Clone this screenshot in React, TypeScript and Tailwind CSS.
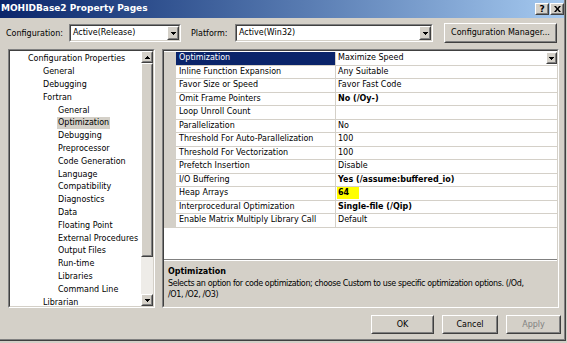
import React from "react";

const treeItems: { label: string; level: number; selected?: boolean }[] = [
  { label: "Configuration Properties", level: 0 },
  { label: "General", level: 1 },
  { label: "Debugging", level: 1 },
  { label: "Fortran", level: 1 },
  { label: "General", level: 2 },
  { label: "Optimization", level: 2, selected: true },
  { label: "Debugging", level: 2 },
  { label: "Preprocessor", level: 2 },
  { label: "Code Generation", level: 2 },
  { label: "Language", level: 2 },
  { label: "Compatibility", level: 2 },
  { label: "Diagnostics", level: 2 },
  { label: "Data", level: 2 },
  { label: "Floating Point", level: 2 },
  { label: "External Procedures", level: 2 },
  { label: "Output Files", level: 2 },
  { label: "Run-time", level: 2 },
  { label: "Libraries", level: 2 },
  { label: "Command Line", level: 2 },
  { label: "Librarian", level: 1 },
];

const properties: { name: string; value: string; bold?: boolean; highlight?: boolean }[] = [
  { name: "Optimization", value: "Maximize Speed" },
  { name: "Inline Function Expansion", value: "Any Suitable" },
  { name: "Favor Size or Speed", value: "Favor Fast Code" },
  { name: "Omit Frame Pointers", value: "No (/Oy-)", bold: true },
  { name: "Loop Unroll Count", value: "" },
  { name: "Parallelization", value: "No" },
  { name: "Threshold For Auto-Parallelization", value: "100" },
  { name: "Threshold For Vectorization", value: "100" },
  { name: "Prefetch Insertion", value: "Disable" },
  { name: "I/O Buffering", value: "Yes (/assume:buffered_io)", bold: true },
  { name: "Heap Arrays", value: "64", bold: true, highlight: true },
  { name: "Interprocedural Optimization", value: "Single-file (/Qip)", bold: true },
  { name: "Enable Matrix Multiply Library Call", value: "Default" },
];

const indents = ["pl-[17px]", "pl-[32px]", "pl-[47px]"];

const Raised = ({ className = "", children }: { className?: string; children?: React.ReactNode }) => (
  <div className={`border border-t-white border-l-white border-b-[#404040] border-r-[#404040] bg-[#d4d0c8] ${className}`}>
    <div className="flex h-full w-full items-center justify-center border border-t-[#d4d0c8] border-l-[#d4d0c8] border-b-[#808080] border-r-[#808080]">
      {children}
    </div>
  </div>
);

const Sunken = ({ className = "", children }: { className?: string; children?: React.ReactNode }) => (
  <div className={`border border-t-[#808080] border-l-[#808080] border-b-white border-r-white ${className}`}>
    <div className="flex h-full w-full flex-col border border-t-[#404040] border-l-[#404040] border-b-[#d4d0c8] border-r-[#d4d0c8]">
      {children}
    </div>
  </div>
);

const ArrowDown = () => (
  <svg width="5" height="3" viewBox="0 0 5 3">
    <path d="M0 0h5v1H0zM1 1h3v1H1zM2 2h1v1H2z" fill="#000" />
  </svg>
);

const ArrowUp = () => (
  <svg width="5" height="3" viewBox="0 0 5 3">
    <path d="M2 0h1v1H2zM1 1h3v1H1zM0 2h5v1H0z" fill="#000" />
  </svg>
);

const Select = ({ value, width }: { value: string; width: string }) => (
  <Sunken className={`h-[18px] ${width} bg-white`}>
    <div className="flex h-full items-center justify-between">
      <span className="pl-[2px] leading-none">{value}</span>
      <Raised className="h-full w-[12px]">
        <ArrowDown />
      </Raised>
    </div>
  </Sunken>
);

export default function App() {
  return (
    <div className="h-[343px] w-[567px] overflow-hidden bg-[#d4d0c8] font-['DejaVu_Sans',sans-serif] text-[8px] text-black">
      <div className="h-[341px] w-[566px] border-b border-r border-[#404040]">
        <div className="h-full border-b border-r border-[#808080]">
          {/* title bar */}
          <div className="flex h-[18px] items-center justify-between bg-gradient-to-r from-[#0a246a] to-[#a6caf0] pl-[1px]">
            <span className="text-[9px] font-bold text-white">MOHIDBase2 Property Pages</span>
            <div className="flex gap-[1px]">
              <Raised className="h-[12px] w-[14px]">
                <span className="text-[9px] font-bold leading-none">?</span>
              </Raised>
              <Raised className="h-[12px] w-[14px]">
                <svg width="7" height="6" viewBox="0 0 7 6">
                  <path d="M0 0h2l1.5 2L5 0h2L4.5 3 7 6H5L3.5 4 2 6H0l2.5-3z" fill="#000" />
                </svg>
              </Raised>
            </div>
          </div>

          {/* configuration row */}
          <div className="mt-[6px] flex h-[18px] items-center">
            <span className="w-[69px] pl-[6px] pt-[1px]">Configuration:</span>
            <Select value="Active(Release)" width="w-[112px]" />
            <span className="ml-[10px] w-[44px] pt-[1px]">Platform:</span>
            <Select value="Active(Win32)" width="w-[198px]" />
            <Raised className="ml-[11px] h-[20px] w-[113px]">
              <span>Configuration Manager...</span>
            </Raised>
          </div>

          {/* panels */}
          <div className="mt-[7px] flex h-[259px] pl-[8px]">
            <Sunken className="h-full w-[147px] bg-white">
              <div className="flex h-full">
                <div className="flex-1 pt-[2px]">
                  {treeItems.map((item, i) => (
                    <div key={i} className={`flex h-[12.8px] items-center whitespace-nowrap ${indents[item.level]}`}>
                      <span className={item.selected ? "bg-[#d4d0c8] px-[1px]" : "px-[1px]"}>{item.label}</span>
                    </div>
                  ))}
                </div>
                <div className="flex w-[12px] flex-col">
                  <Raised className="h-[12px] w-[12px]">
                    <ArrowUp />
                  </Raised>
                  <Raised className="h-[194px] w-[12px]" />
                  <div className="flex-1 bg-[#eeece8]" />
                  <Raised className="h-[12px] w-[12px]">
                    <ArrowDown />
                  </Raised>
                </div>
              </div>
            </Sunken>

            <Sunken className="ml-[7px] h-full w-[397px] bg-[#d4d0c8]">
              <div className="h-[208px] bg-white pt-[1px]">
                {properties.map((p, i) => (
                  <div key={i} className="flex h-[13.5px]">
                    <div className="w-[12px] bg-[#d4d0c8]" />
                    <div
                      className={`flex w-[160px] items-center whitespace-nowrap border-b border-r border-[#d4d0c8] pl-[3px] ${
                        i === 0 ? "bg-[#0a246a] text-white" : ""
                      }`}
                    >
                      {p.name}
                    </div>
                    <div className="flex flex-1 items-center justify-between whitespace-nowrap border-b border-[#d4d0c8] pl-[1px]">
                      <span className={`px-[1px] ${p.bold ? "font-bold" : ""} ${p.highlight ? "bg-[#ffff00] pr-[10px]" : ""}`}>
                        {p.value}
                      </span>
                      {i === 0 && (
                        <Raised className="h-[12px] w-[11px]">
                          <ArrowDown />
                        </Raised>
                      )}
                    </div>
                  </div>
                ))}
              </div>
              <div className="h-[2px] border-t border-b border-t-[#808080] border-b-white" />
              <div className="flex-1 px-[4px] pt-[5px]">
                <div className="font-bold leading-[11px]">Optimization</div>
                <div className="mt-[2px] whitespace-nowrap leading-[10.5px] tracking-[-0.38px]">
                  Selects an option for code optimization; choose Custom to use specific optimization options. (/Od,
                  <br />
                  /O1, /O2, /O3)
                </div>
              </div>
            </Sunken>
          </div>

          {/* buttons */}
          <div className="mt-[7px] flex h-[19px] gap-[8px] pl-[371px]">
            <Raised className="h-full w-[63px]">
              <span>OK</span>
            </Raised>
            <Raised className="h-full w-[56px]">
              <span>Cancel</span>
            </Raised>
            <Raised className="h-full w-[55px]">
              <span className="text-[#808080]">Apply</span>
            </Raised>
          </div>
        </div>
      </div>
    </div>
  );
}
